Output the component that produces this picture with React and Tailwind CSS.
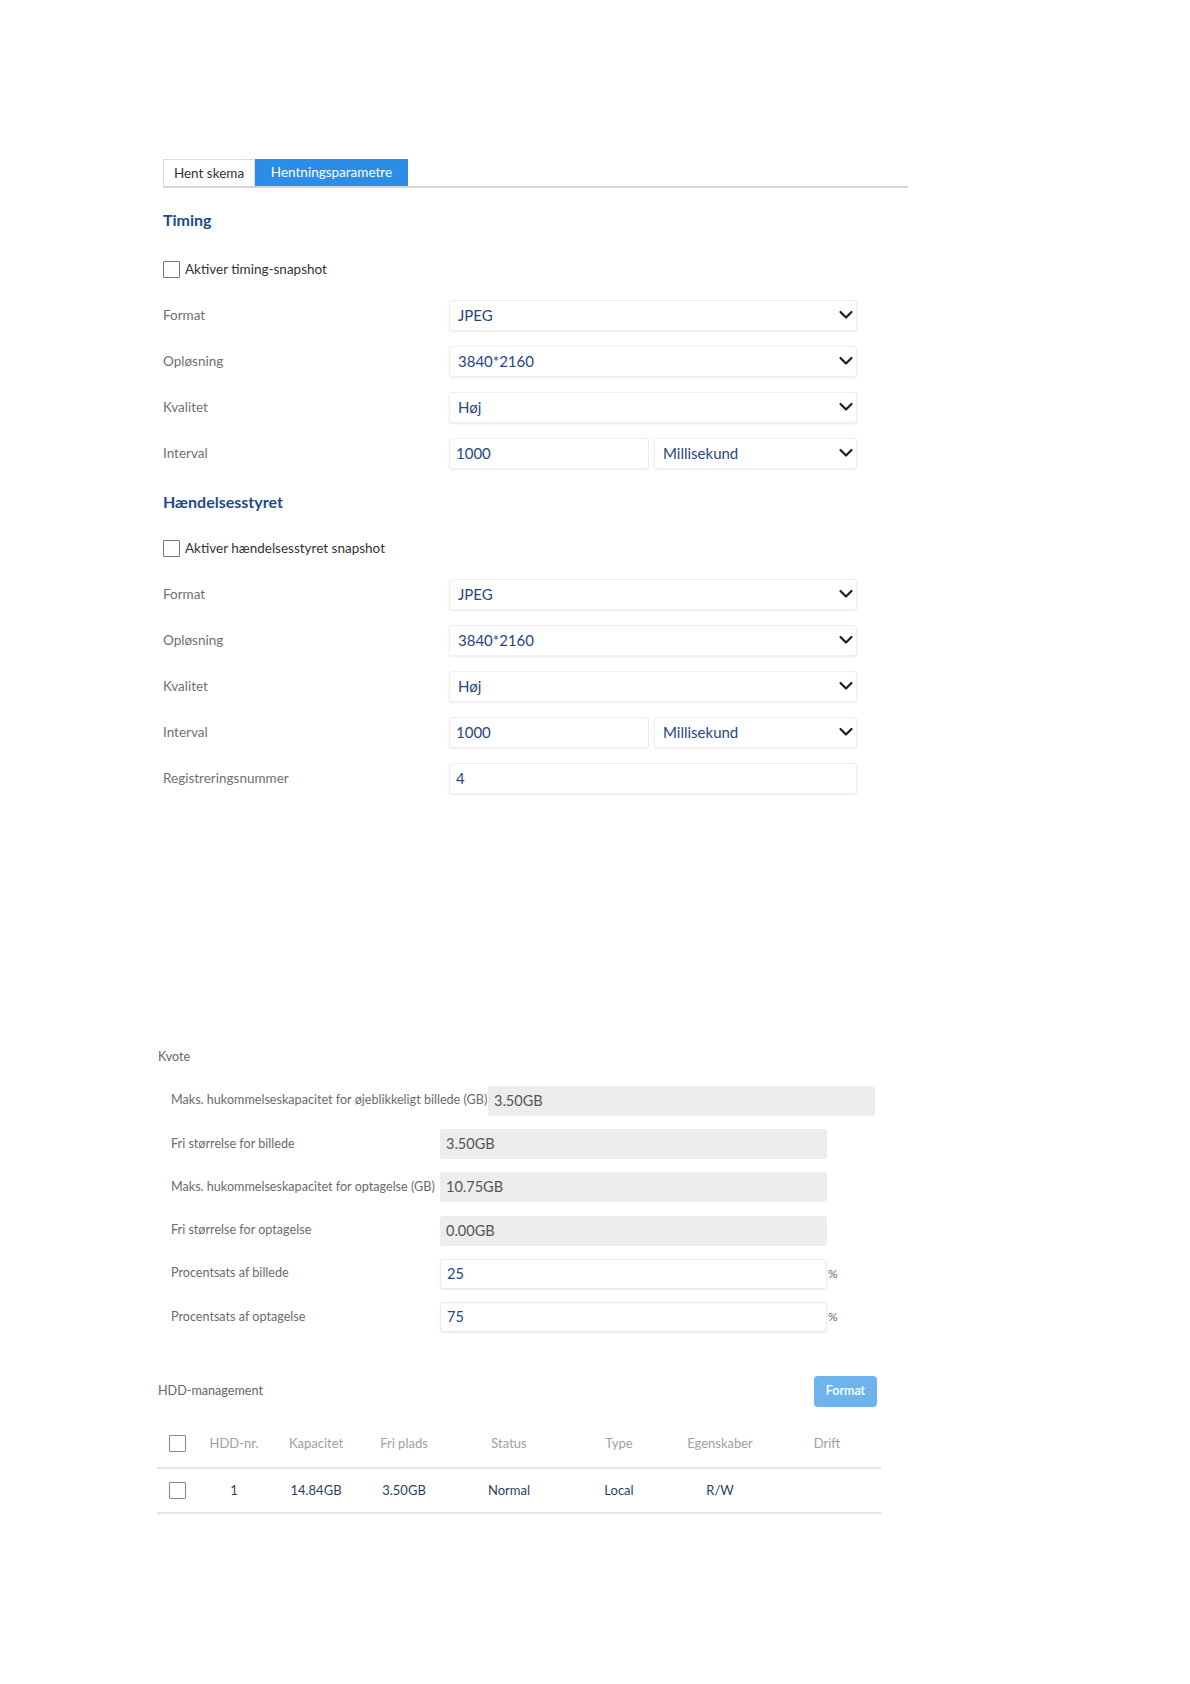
const Chevron = () => (
  <svg width="16" height="16" viewBox="0 0 16 16" className="shrink-0">
    <path d="M2.5 5 L8 10.5 L13.5 5" fill="none" stroke="#1e1e1e" strokeWidth="2.2" strokeLinecap="round" strokeLinejoin="round" />
  </svg>
);

const SelectBox = ({ value, className = "" }) => (
  <div className={`h-[31px] flex items-center justify-between pl-[8px] pr-[2px] bg-white border border-[#eeeeee] rounded-[3px] shadow-[0_1px_2px_rgba(0,0,0,0.08)] ${className}`}>
    <span className="text-[15px] text-[#27477c]">{value}</span>
    <Chevron />
  </div>
);

const TextBox = ({ value, className = "" }) => (
  <div className={`h-[31px] flex items-center pl-[6px] bg-white border border-[#eeeeee] rounded-[3px] shadow-[0_1px_2px_rgba(0,0,0,0.08)] ${className}`}>
    <span className="text-[15px] text-[#27477c]">{value}</span>
  </div>
);

const Row = ({ label, children }) => (
  <div className="h-[46px] flex items-center">
    <div className="w-[286px] text-[13.5px] text-[#707070]">{label}</div>
    {children}
  </div>
);

const Check = ({ label }) => (
  <div className="h-[20px] flex items-center gap-[5px]">
    <div className="w-[17px] h-[17px] border border-[#777] rounded-[1px] bg-white" />
    <span className="text-[13.5px] text-[#333]">{label}</span>
  </div>
);

const Section = ({ title, checkLabel, extra, mt, checkMt }) => (
  <div>
    <div className={`${mt} h-[20px] flex items-center text-[16px] font-bold text-[#1c4b88]`}>{title}</div>
    <div className={checkMt}>
      <Check label={checkLabel} />
    </div>
    <div className="mt-[13px]">
      <Row label="Format"><SelectBox value="JPEG" className="w-[408px]" /></Row>
      <Row label="Opløsning"><SelectBox value="3840*2160" className="w-[408px]" /></Row>
      <Row label="Kvalitet"><SelectBox value="Høj" className="w-[408px]" /></Row>
      <Row label="Interval">
        <div className="flex gap-[5px]">
          <TextBox value="1000" className="w-[200px]" />
          <SelectBox value="Millisekund" className="w-[203px]" />
        </div>
      </Row>
      {extra}
    </div>
  </div>
);

const QuotaRow = ({ label, value, disabled = true, pct = false, labelW = "w-[269px]" }) => (
  <div className="h-[43.3px] flex items-center">
    <div className={`${labelW} text-[12.6px] text-[#6b6b6b] whitespace-nowrap`}>{label}</div>
    <div
      className={`w-[387px] h-[30px] flex items-center pl-[6px] rounded-[3px] ${
        disabled ? "bg-[#ededed]" : "bg-white border border-[#ececec] shadow-[0_1px_2px_rgba(0,0,0,0.08)]"
      }`}
    >
      <span className={`text-[14.5px] ${disabled ? "text-[#555]" : "text-[#27477c]"}`}>{value}</span>
    </div>
    {pct && <span className="ml-[1px] text-[12px] text-[#666]">%</span>}
  </div>
);

const cols = [
  { w: "w-[74px]", h: "HDD-nr.", v: "1" },
  { w: "w-[90px]", h: "Kapacitet", v: "14.84GB" },
  { w: "w-[86px]", h: "Fri plads", v: "3.50GB" },
  { w: "w-[124px]", h: "Status", v: "Normal" },
  { w: "w-[96px]", h: "Type", v: "Local" },
  { w: "w-[106px]", h: "Egenskaber", v: "R/W" },
  { w: "w-[108px]", h: "Drift", v: "" },
];

export default function App() {
  return (
    <div className="w-[1190px] min-h-[1684px] bg-white pt-[159px] font-['Lato','Open_Sans',sans-serif]">
      <div className="pl-[163px]">
        {/* tabs */}
        <div className="w-[745px] flex border-b-2 border-[#d5d5d5]">
          <div className="h-[27px] w-[92px] flex items-center justify-center bg-white border border-b-0 border-[#dcdcdc] text-[13.5px] text-[#333]">Hent skema</div>
          <div className="h-[27px] w-[153px] flex items-center justify-center bg-[#2a8de8] text-[13.5px] text-white">Hentningsparametre</div>
        </div>

        <Section title="Timing" checkLabel="Aktiver timing-snapshot" mt="mt-[22px]" checkMt="mt-[29px]" />
        <Section
          title="Hændelsesstyret"
          checkLabel="Aktiver hændelsesstyret snapshot"
          mt="mt-[16px]"
          checkMt="mt-[26px]"
          extra={<Row label="Registreringsnummer"><TextBox value="4" className="w-[408px]" /></Row>}
        />
      </div>

      <div className="pl-[158px]">
        {/* Kvote */}
        <div className="mt-[247px] h-[18px] flex items-center text-[12.6px] text-[#666]">Kvote</div>
        <div className="mt-[13px] pl-[13px]">
          <QuotaRow label="Maks. hukommelseskapacitet for øjeblikkeligt billede (GB)" value="3.50GB" labelW="w-[317px]" />
          <QuotaRow label="Fri størrelse for billede" value="3.50GB" />
          <QuotaRow label="Maks. hukommelseskapacitet for optagelse (GB)" value="10.75GB" />
          <QuotaRow label="Fri størrelse for optagelse" value="0.00GB" />
          <QuotaRow label="Procentsats af billede" value="25" disabled={false} pct />
          <QuotaRow label="Procentsats af optagelse" value="75" disabled={false} pct />
        </div>

        {/* HDD */}
        <div className="mt-[37px] w-[719px] flex items-center justify-between">
          <span className="text-[12.6px] text-[#666]">HDD-management</span>
          <div className="h-[31px] w-[63px] flex items-center justify-center rounded-[4px] bg-[#6db4ef] text-[12.5px] text-white font-semibold">Format</div>
        </div>

        <div className="mt-[14px] w-[724px] -ml-[1px]">
          <div className="h-[48px] flex items-center border-b-2 border-[#e6e6e6]">
            <div className="w-[40px] flex justify-center">
              <div className="w-[17px] h-[17px] border border-[#888] rounded-[1px]" />
            </div>
            {cols.map((c) => (
              <div key={c.h} className={`${c.w} text-center text-[13px] text-[#a0a0a0]`}>{c.h}</div>
            ))}
          </div>
          <div className="h-[45px] flex items-center border-b-2 border-[#e6e6e6]">
            <div className="w-[40px] flex justify-center">
              <div className="w-[17px] h-[17px] border border-[#888] rounded-[1px]" />
            </div>
            {cols.map((c) => (
              <div key={c.h} className={`${c.w} text-center text-[13px] text-[#2c3f63]`}>{c.v}</div>
            ))}
          </div>
        </div>
      </div>
    </div>
  );
}
